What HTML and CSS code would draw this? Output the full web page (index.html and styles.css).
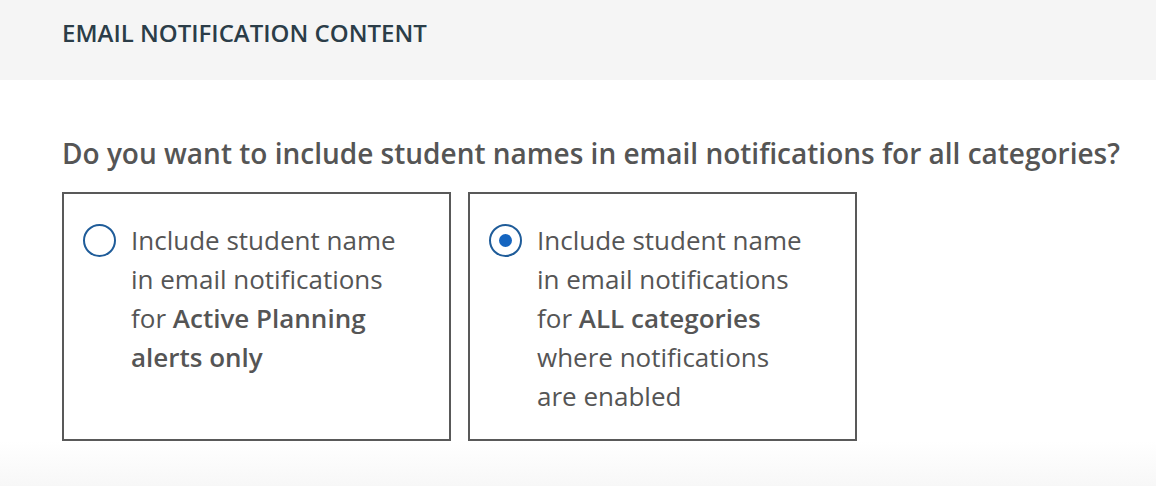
FILE: index.html
```html
<!DOCTYPE html>
<html lang="en">
<head>
    <meta charset="UTF-8">
    <title>Email Notification Content</title>
    <link rel="stylesheet" href="styles.css">
</head>
<body>
    <div class="section-header">
        <h2>EMAIL NOTIFICATION CONTENT</h2>
    </div>
    <div class="section-body">
        <p class="question">Do you want to include student names in email notifications for all categories?</p>
        <div class="options">
            <label class="option">
                <span class="radio"></span>
                <span class="option-text">Include student name<br>in email notifications<br>for <strong>Active Planning<br>alerts only</strong></span>
            </label>
            <label class="option">
                <span class="radio checked"></span>
                <span class="option-text">Include student name<br>in email notifications<br>for <strong>ALL categories</strong><br>where notifications<br>are enabled</span>
            </label>
        </div>
    </div>
    <div class="section-footer"></div>
</body>
</html>
```

FILE: styles.css
```css
body {
    margin: 0;
    font-family: "Open Sans", Arial, sans-serif;
    background: #fff;
    color: #555;
}

.section-header {
    background: #f5f5f5;
    height: 80px;
    padding-left: 62px;
    display: flex;
    align-items: center;
}

.section-header h2 {
    margin: 0 0 15px 0;
    font-size: 24px;
    font-weight: 600;
    color: #2b3d48;
}

.section-body {
    padding: 54px 62px 0 62px;
}

.question {
    margin: 0 0 20px 0;
    font-size: 28px;
    line-height: 38px;
    font-weight: 600;
    color: #555;
    white-space: nowrap;
}

.options {
    display: flex;
    gap: 17px;
}

.option {
    box-sizing: border-box;
    width: 389px;
    height: 249px;
    border: 2px solid #595959;
    padding: 27px 20px 0 19px;
    display: flex;
    align-items: flex-start;
}

.radio {
    flex: none;
    box-sizing: border-box;
    width: 33px;
    height: 33px;
    border: 2px solid #1f5c99;
    border-radius: 50%;
    margin-top: 3px;
    margin-right: 15px;
    display: flex;
    align-items: center;
    justify-content: center;
}

.radio.checked::after {
    content: "";
    width: 13px;
    height: 13px;
    border-radius: 50%;
    background: #1565c0;
}

.option-text {
    font-size: 26px;
    line-height: 39px;
    color: #555;
}

.option-text strong {
    font-weight: 600;
}

.section-footer {
    height: 46px;
    background: linear-gradient(#fff, #f7f7f7);
}
```
